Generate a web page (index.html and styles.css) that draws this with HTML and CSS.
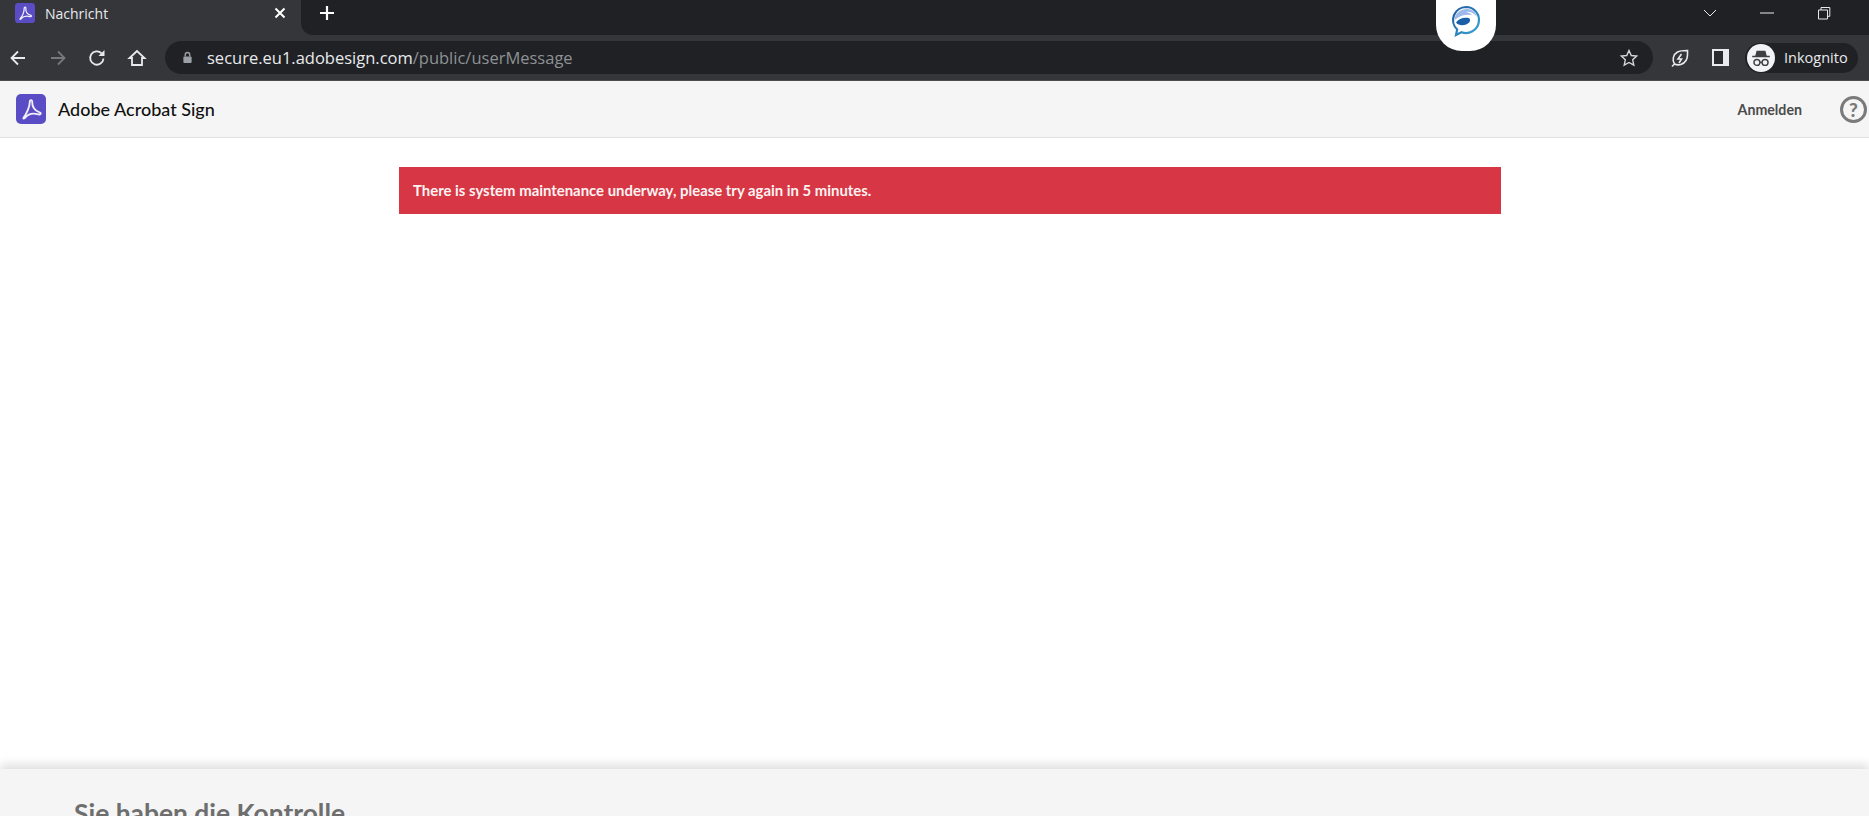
FILE: index.html
```html
<!DOCTYPE html>
<html lang="de">
<head>
    <meta charset="UTF-8">
    <meta name="viewport" content="width=device-width, initial-scale=1.0">
    <title>Nachricht</title>
    <link rel="stylesheet" href="styles.css">
</head>
<body>

    <svg class="defs" width="0" height="0">
        <defs>
            <linearGradient id="ring" x1="0" y1="0" x2="1" y2="1">
                <stop offset="0" stop-color="#1b57a0"/>
                <stop offset="1" stop-color="#3aa8d8"/>
            </linearGradient>
        </defs>
        <symbol id="acrobat" viewBox="0 0 24 24">
            <rect width="24" height="24" rx="4" fill="#5a4cc4"/>
            <path d="M6 19C8.500 16 11 10 11 6.500 11 4.500 13.200 4.500 13 6.500 12.800 10 15 13.500 18.500 14.500 20.500 15 20 16.800 18 16.300 14.500 15.300 10 15.500 7.500 18.800 6.800 19.800 5.300 19.800 6 19z" fill="none" stroke="#f1eefc" stroke-width="1.500" stroke-linejoin="round"/>
        </symbol>
    </svg>

    <div class="browser">
        <div class="tabstrip">
            <div class="tab">
                <svg class="favicon"><use href="#acrobat"/></svg>
                <span class="tab-title">Nachricht</span>
                <svg class="tab-close" viewBox="0 0 12 12"><path d="M1.500 1.500l9 9M10.500 1.500l-9 9"/></svg>
            </div>
            <div class="strip-rest">
                <svg class="new-tab" viewBox="0 0 16 16"><path d="M8 1v14M1 8h14"/></svg>
                <div class="window-controls">
                    <svg class="win-icon" viewBox="0 0 16 16"><path d="M2 5l6 6 6-6"/></svg>
                    <svg class="win-icon" viewBox="0 0 16 16"><path d="M1 8h14"/></svg>
                    <svg class="win-icon" viewBox="0 0 16 16"><path d="M2.500 5h9v9h-9zM5 5V2.500h8.800v8.800H11.500"/></svg>
                </div>
            </div>
        </div>
        <div class="toolbar">
            <div class="nav-buttons">
                <svg class="nav-icon" viewBox="0 0 20 20"><path d="M17 10H4M10 3.500L3.500 10l6.500 6.500"/></svg>
                <svg class="nav-icon disabled" viewBox="0 0 20 20"><path d="M3 10h13M10 3.500l6.500 6.500-6.500 6.500"/></svg>
                <svg class="nav-icon" viewBox="0 0 20 20"><path d="M16.500 10.500a6.700 6.700 0 1 1-1.900-5.200"/><path class="solid" d="M17.500 2v6h-6z"/></svg>
                <svg class="nav-icon" viewBox="0 0 20 20"><path d="M10 3L2.500 10H5v7h10v-7h2.500z"/></svg>
            </div>
            <div class="omnibox">
                <svg class="lock" viewBox="0 0 12 14"><path d="M3.500 6V4a2.500 2.500 0 0 1 5 0v2"/><rect class="solid" x="1.500" y="6" width="9" height="7" rx="1"/></svg>
                <span class="url">secure.eu1.adobesign.com<span class="url-path">/public/userMessage</span></span>
                <svg class="star" viewBox="0 0 20 20"><path d="M10 2.500l2.300 5 5.400.6-4 3.700 1.100 5.400-4.800-2.700-4.800 2.700 1.100-5.400-4-3.700 5.400-.6z"/></svg>
            </div>
            <div class="extensions">
                <svg class="ext-leaf" viewBox="0 0 20 20"><path d="M2 18.500l2.500-2.500C2 12 3 6.500 7.500 4c3-1.600 7-1.500 10-1.500 0 3 .5 7-1.500 10-2.500 4-7.500 5.500-11.500 3.500"/><path d="M11.500 6L8 11h3.500L9 15"/></svg>
                <div class="side-panel"></div>
                <div class="profile">
                    <span class="avatar">
                        <svg viewBox="0 0 20 20"><path class="solid" d="M6 3.500h8l1.200 4.500H18v1.300H2V8h2.800z"/><circle cx="6.300" cy="14" r="2.700"/><circle cx="13.700" cy="14" r="2.700"/><path d="M9 14h2"/></svg>
                    </span>
                    <span class="profile-name">Inkognito</span>
                </div>
            </div>
        </div>
        <!-- erweiterung ragt von oben in die leiste -->
        <div class="ext-bubble">
            <svg viewBox="0 0 32 32">
                <path d="M16 2a13 13 0 1 1-4.500 25.200L6 30l1.200-5.500A13 13 0 0 1 16 2z" fill="#fff" stroke="url(#ring)" stroke-width="2.200"/>
                <path d="M4.500 15C5 8 11 3.500 17.500 4c5 .4 8.500 3.500 9.500 8-3-4-7-6-11-5 3 .5 5 1.500 6 3-6-1-12 0-17.500 5z" fill="#9db8ea"/>
                <path d="M6 17.500c2.500-3.500 7.500-5.500 12.500-4.500 2 .5 2 3.500 0 5-3.500 3-10 3-12.500-.5z" fill="#1a5ea8"/>
            </svg>
        </div>
    </div>

    <header class="app-header">
        <svg class="app-logo"><use href="#acrobat"/></svg>
        <span class="app-name">Adobe Acrobat Sign</span>
        <a class="login" href="#">Anmelden</a>
        <span class="help">?</span>
    </header>

    <main class="content">
        <div class="alert">There is system maintenance underway, please try again in 5 minutes.</div>
    </main>

    <footer class="app-footer">
        <h2>Sie haben die Kontrolle</h2>
    </footer>

</body>
</html>
```

FILE: styles.css
```css
html, body {
    height: 100%;
}
body {
    margin: 0;
    display: flex;
    flex-direction: column;
    overflow: hidden;
    background-color: white;
    font-family: "Lato", sans-serif;
}
.defs {
    position: absolute;
}
svg {
    fill: none;
    stroke: #e8eaed;
    stroke-width: 1.800;
}
svg .solid {
    fill: currentColor;
    stroke: none;
}

/* browser */
.browser {
    position: relative;
    flex: none;
    background-color: #35363a;
    border-bottom: 1px solid #4a4b4e;
    font-family: "Open Sans", sans-serif;
    color: #e8eaed;
}
.tabstrip {
    display: flex;
    height: 35px;
}
.tab {
    display: flex;
    align-items: center;
    width: 301px;
    height: 26px;
    padding-left: 15px;
    box-sizing: border-box;
    background-color: #35363a;
}
.favicon {
    width: 20px;
    height: 20px;
    stroke: none;
}
.tab-title {
    margin-left: 10px;
    font-size: 14px;
}
.tab-close {
    width: 12px;
    height: 12px;
    margin-left: auto;
    margin-right: 15px;
    stroke: white;
    stroke-width: 2;
}
.strip-rest {
    flex: 1;
    display: flex;
    align-items: flex-start;
    padding: 5px 0 0 18px;
    background-color: #202124;
    border-bottom-left-radius: 12px;
}
.new-tab {
    width: 16px;
    height: 16px;
    stroke: white;
    stroke-width: 2.200;
}
.window-controls {
    display: flex;
    gap: 41px;
    margin-left: auto;
    margin-right: 37px;
}
.win-icon {
    width: 16px;
    height: 16px;
    stroke-width: 1;
}
.toolbar {
    display: flex;
    align-items: center;
    height: 45px;
}
.nav-buttons {
    display: flex;
    gap: 19.600px;
    width: 165px;
    padding-left: 8px;
    box-sizing: border-box;
}
.nav-icon {
    width: 20px;
    height: 20px;
    color: #e8eaed;
}
.nav-icon.disabled {
    stroke: #77787b;
}
.omnibox {
    display: flex;
    align-items: center;
    width: 1488px;
    height: 33px;
    padding: 0 14px 0 17px;
    box-sizing: border-box;
    background-color: #202124;
    border-radius: 17px;
}
.lock {
    width: 11px;
    height: 13px;
    color: #9aa0a6;
    stroke: #9aa0a6;
    stroke-width: 1.500;
}
.url {
    margin-left: 14px;
    font-size: 16.500px;
    color: #e8eaed;
}
.url-path {
    color: #8e9196;
}
.star {
    width: 20px;
    height: 20px;
    margin-left: auto;
    stroke: #d4d6d9;
    stroke-width: 1.400;
}
.extensions {
    display: flex;
    align-items: center;
    margin-left: 17px;
}
.ext-leaf {
    width: 20px;
    height: 20px;
    stroke-width: 1.600;
}
.side-panel {
    width: 9px;
    height: 13px;
    margin-left: 22px;
    background-color: #2a2b2e;
    border: 2px solid #e8eaed;
    border-right-width: 6px;
}
.profile {
    display: flex;
    align-items: center;
    width: 113px;
    height: 30px;
    margin-left: 16px;
    box-sizing: border-box;
    background-color: #202124;
    border-radius: 15px;
}
.avatar {
    display: flex;
    align-items: center;
    justify-content: center;
    width: 28px;
    height: 28px;
    margin-left: 2px;
    border-radius: 50%;
    background-color: #f1f3f4;
    color: #3c4043;
}
.avatar svg {
    width: 22px;
    height: 22px;
    stroke: #3c4043;
    stroke-width: 1.300;
}
.profile-name {
    margin-left: 9px;
    font-size: 14.500px;
}
.ext-bubble {
    position: absolute;
    top: 0;
    left: 1436px;
    width: 60px;
    height: 51px;
    display: flex;
    justify-content: center;
    padding-top: 4px;
    box-sizing: border-box;
    background-color: white;
    border-radius: 0 0 26px 26px;
}
.ext-bubble svg {
    width: 32px;
    height: 34px;
    stroke: none;
}

/* adobe sign */
.app-header {
    flex: none;
    display: flex;
    align-items: center;
    height: 56px;
    padding: 0 2px 0 16px;
    background-color: #f5f5f5;
    border-bottom: 1px solid #e1e1e1;
}
.app-logo {
    width: 30px;
    height: 30px;
    stroke: none;
}
.app-name {
    margin-left: 12px;
    font-size: 18px;
    font-weight: 500;
    color: #111;
}
.login {
    margin-left: auto;
    font-size: 14.200px;
    font-weight: bold;
    color: #4b4b4b;
    text-decoration: none;
}
.help {
    display: flex;
    align-items: center;
    justify-content: center;
    width: 21px;
    height: 21px;
    margin-left: 38px;
    border: 3px solid #7a7a7a;
    border-radius: 50%;
    font-size: 19px;
    font-weight: 900;
    color: #7a7a7a;
}
.content {
    flex: 1;
    padding-top: 29px;
}
.alert {
    width: 1102px;
    height: 47px;
    margin-left: 399px;
    padding-left: 14px;
    box-sizing: border-box;
    line-height: 47px;
    background-color: #d73644;
    font-size: 14.900px;
    font-weight: bold;
    color: #fdf3f3;
}
.app-footer {
    flex: none;
    height: 47px;
    padding-left: 74px;
    overflow: hidden;
    background-color: #f5f5f5;
    box-shadow: 0 -4px 10px rgba(0, 0, 0, 0.14);
}
.app-footer h2 {
    margin: 29px 0 0;
    font-size: 26.400px;
    font-weight: bold;
    line-height: 30px;
    color: #6e6e6e;
}
```
